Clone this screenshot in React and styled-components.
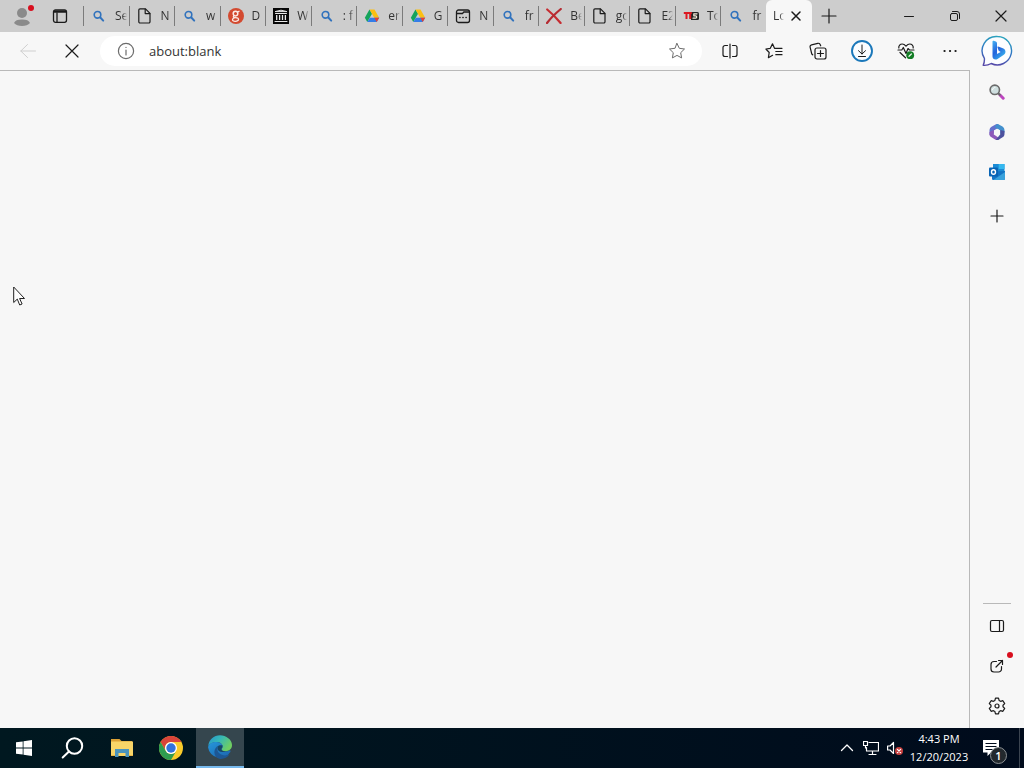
import React from "react";
import styled, { createGlobalStyle } from "styled-components";

const GlobalStyle = createGlobalStyle`
  *, *::before, *::after { box-sizing: border-box; }
  body {
    margin: 0;
    background: #f7f7f7;
    font-family: "Open Sans", "Noto Sans", sans-serif;
    color: #1b1b1b;
  }
  button, input { font: inherit; color: inherit; }
  svg { display: block; flex: none; }
`;

const Desktop = styled.div`
  position: relative;
  display: flex;
  flex-direction: column;
  min-height: 100vh;
`;

const IconButton = styled.button`
  display: flex;
  align-items: center;
  justify-content: center;
  flex: none;
  width: ${(p) => p.$w || 40}px;
  height: ${(p) => p.$h || 40}px;
  padding: 0;
  border: 0;
  background: none;
  color: ${(p) => p.$color || "#1b1b1b"};
`;

const TabBar = styled.header`
  display: flex;
  height: 32px;
  background: #cdcdcd;
`;

const TabTools = styled.div`
  display: flex;
  flex: none;
  padding-right: 7px;
`;

const TabList = styled.div`
  display: flex;
  flex: 1;
  min-width: 0;
`;

const Tab = styled.button`
  display: flex;
  align-items: center;
  flex: 1 1 0;
  min-width: 0;
  height: 32px;
  padding: 0 2px 0 0;
  border: 0;
  background: none;
  text-align: left;

  &::before {
    content: "";
    flex: none;
    width: 1px;
    height: 20px;
    margin-right: 7px;
    background: #7b7b7b;
  }
`;

const TabTitle = styled.span`
  flex: 1;
  min-width: 0;
  margin-left: ${(p) => p.$gap}px;
  overflow: hidden;
  white-space: nowrap;
  font-size: 12px;
  line-height: 20px;
  color: #333;
  mask-image: linear-gradient(to right, #000 60%, transparent);
`;

const ActiveTab = styled.div`
  display: flex;
  align-items: center;
  flex: none;
  width: 46px;
  padding-right: 4px;
  border-radius: 6px 6px 0 0;
  background: #f7f7f7;
`;

const WindowControls = styled.div`
  display: flex;
  flex: none;
  margin-left: 40px;
`;

const Body = styled.div`
  display: flex;
  flex: 1;
`;

const Main = styled.div`
  display: flex;
  flex-direction: column;
  flex: 1;
  min-width: 0;
`;

const Toolbar = styled.nav`
  display: flex;
  align-items: center;
  gap: 4px;
  height: 38px;
  padding-left: 8px;
`;

const AddressBar = styled.div`
  display: flex;
  align-items: center;
  flex: 1;
  min-width: 0;
  height: 30px;
  margin: 0 4px;
  padding: 0 16px;
  border-radius: 15px;
  background: #fff;
`;

const AddressInput = styled.input`
  flex: 1;
  min-width: 0;
  height: 24px;
  margin: 0 14px;
  padding: 0;
  border: 0;
  outline: 0;
  background: none;
  font-size: 13px;
  line-height: 24px;
  color: #333;
`;

const Page = styled.main`
  flex: 1;
  border-top: 1px solid #b9b9b9;
  border-right: 1px solid #b9b9b9;
  background: #f7f7f7;
`;

const Sidebar = styled.aside`
  display: flex;
  flex-direction: column;
  align-items: center;
  flex: none;
  width: 54px;
  padding-bottom: 2px;
`;

const SideGroup = styled.div`
  display: flex;
  flex-direction: column;
  align-items: center;
  margin-top: ${(p) => p.$top || "0"};
`;

const SideDivider = styled.hr`
  width: 28px;
  height: 1px;
  margin: 0 0 2px;
  border: 0;
  background: #b9b9b9;
`;

const Badged = styled.div`
  position: relative;
`;

const RedDot = styled.span`
  position: absolute;
  top: ${(p) => p.$top}px;
  right: ${(p) => p.$right}px;
  width: 6px;
  height: 6px;
  border-radius: 50%;
  background: #d80f1e;
`;

const Taskbar = styled.footer`
  display: flex;
  justify-content: space-between;
  height: 40px;
  background: linear-gradient(to right, #001820, #000b1c);
`;

const TaskApps = styled.div`
  display: flex;
  gap: 1px;
`;

const TaskButton = styled(IconButton)`
  background: ${(p) => (p.$active ? "#35464e" : "none")};
  border-bottom: ${(p) => (p.$active ? "2px solid #76b9ed" : "0")};
`;

const Tray = styled.div`
  display: flex;
  align-items: center;
`;

const Clock = styled.time`
  width: 64px;
  text-align: center;
  font-size: 11px;
  line-height: 18px;
  color: #fff;
`;

const ShowDesktop = styled.button`
  width: 5px;
  height: 40px;
  padding: 0;
  border: 0;
  border-left: 1px solid #3b4450;
  background: none;
`;

const Notice = styled.button`
  position: relative;
  display: flex;
  align-items: center;
  width: 48px;
  height: 40px;
  padding: 0 0 0 12px;
  border: 0;
  background: none;
`;

const NoticeCount = styled.span`
  position: absolute;
  left: 19px;
  top: 19px;
  width: 17px;
  height: 17px;
  border: 1px solid #8b9094;
  border-radius: 50%;
  background: #22282d;
  color: #fff;
  font-size: 11px;
  font-weight: 600;
  line-height: 15px;
  text-align: center;
`;

const Pointer = styled.div`
  position: absolute;
  left: 13px;
  top: 286px;
`;

const Icon = ({ size = 16, box = 16, w = 1, children }) => (
  <svg width={size} height={size} viewBox={`0 0 ${box} ${box}`} fill="none" stroke="currentColor"
    strokeWidth={w} strokeLinecap="round" strokeLinejoin="round" aria-hidden="true">
    {children}
  </svg>
);

const SearchTabIcon = () => (
  <Icon>
    <g stroke="#3273bd">
      <circle cx="6.5" cy="6.8" r="3.3" strokeWidth="1.6" />
      <path d="M9.3 9.5 12.2 12.6" strokeWidth="2" />
    </g>
  </Icon>
);

const FileIcon = () => (
  <Icon w={1.2}>
    <path d="M3 .8h5.500l4.500 4.500v8.500a1.200 1.200 0 0 1-1.200 1.200H3a1.200 1.200 0 0 1-1.200-1.200V2A1.200 1.200 0 0 1 3 .8Z" />
    <path d="M8.200 1v4.600h4.600" />
  </Icon>
);

const GDiscIcon = () => (
  <Icon w={1.5}>
    <circle cx="8" cy="8" r="8" fill="#d34a30" stroke="none" />
    <g stroke="#fbe9e4">
      <circle cx="7.5" cy="5.6" r="2.3" />
      <path d="M9.5 4 11 3.300M6 7.800c-1.400 1.200-.4 1.800 1.400 1.800 2.600 0 3.300.8 3.100 2-.5 2.200-5.800 2.200-6 .2 0-1 .7-1.600 1.800-2" strokeWidth="1.300" />
    </g>
  </Icon>
);

const ArchiveIcon = () => (
  <Icon>
    <path d="M0 0h16v16H0z" fill="#080808" stroke="none" />
    <path d="M2.500 3.500 8 2.200l5.500 1.300zM2 13.500h12M2.500 5.500h11" stroke="#e8e8e8" />
    <path d="M3.700 7v5M6.600 7v5M9.500 7v5M12.400 7v5" stroke="#e8e8e8" strokeWidth="1.300" strokeLinecap="butt" />
  </Icon>
);

const DriveIcon = () => (
  <Icon>
    <g stroke="none">
      <path d="M5.500 1.500 8 5.800 3.300 14 .8 9.700z" fill="#15a45b" />
      <path d="M5.500 1.500h5L15.200 9.700h-5z" fill="#fbbf12" />
      <path d="M5.800 9.700h9.400L12.700 14H3.300z" fill="#347de8" />
      <path d="M10.300 9.700h4.900L12.700 14z" fill="#e54236" />
    </g>
  </Icon>
);

const BrowserDotsIcon = () => (
  <Icon w={1.3}>
    <rect x="1.500" y="2" width="13" height="12.500" rx="2" />
    <path d="M2 5.500h5.500l1.300-1.500h5.500" />
    <path d="M4.800 9.500h.2M7.900 9.500h.2M11 9.500h.2" strokeWidth="1.500" />
  </Icon>
);

const RedCrossIcon = () => (
  <Icon w={2.200}>
    <path d="M1.200 1.500C5 4.600 10.500 10 14.600 15" stroke="#c62c31" />
    <path d="M14.800 1C10 5 4 11 1 15" stroke="#b52b32" />
  </Icon>
);

const T5Icon = () => (
  <Icon w={1.800}>
    <path d="M8 4h6.500A1.500 1.500 0 0 1 16 5.500v5a1.500 1.500 0 0 1-1.500 1.500H8z" fill="#242424" stroke="none" />
    <path d="M.8 5h8M3.500 5v6M7.200 5v6" stroke="#dd1821" strokeWidth="2" strokeLinecap="butt" />
    <path d="M14 5.800h-3.200v2h1.800c1.500 0 1.500 2.400 0 2.400H10" stroke="#f4eddc" strokeWidth="1.200" />
  </Icon>
);

const CloseIcon = ({ size = 16, w = 1.200, inset = 3 }) => (
  <Icon size={size} w={w}>
    <path d={`M${inset} ${inset}L${16 - inset} ${16 - inset}M${16 - inset} ${inset}L${inset} ${16 - inset}`} />
  </Icon>
);

const PlusIcon = ({ r = 7 }) => (
  <Icon w={1.200}>
    <path d={`M8 ${8 - r}v${2 * r}M${8 - r} 8h${2 * r}`} />
  </Icon>
);

const BingIcon = () => (
  <Icon size={32} box={32}>
    <defs>
      <linearGradient id="ring" x1=".6" y1="0" x2=".4" y2="1">
        <stop offset="0" stopColor="#2ba3bd" />
        <stop offset=".5" stopColor="#2f78c4" />
        <stop offset="1" stopColor="#5648a8" />
      </linearGradient>
      <linearGradient id="bolt" x1="0" y1="0" x2=".7" y2="1">
        <stop offset="0" stopColor="#45b4f2" />
        <stop offset=".5" stopColor="#2463dc" />
        <stop offset="1" stopColor="#38b4ee" />
      </linearGradient>
    </defs>
    <path d="M16.500 1.500a14.200 14.200 0 1 1-6.300 27c-2.500 1.500-5.200 2-8 1.800 1-2.300 1.400-4.600 1.200-7A14.200 14.200 0 0 1 16.500 1.500Z" fill="#fcfdff" stroke="url(#ring)" strokeWidth="1.400" />
    <path d="M11.500 6.500c0-.7.600-.9 1.200-.7l2 .8c.8.300 1.300 1 1.300 1.900v10.500l3.700-2.100-2-1.200-1.300-3.400c-.2-.6.200-1 .8-.8l4.600 1.700c3.300 1.200 3.600 5.100.7 6.800L16.500 24c-2.300 1.300-5 .1-5-2.500z" fill="url(#bolt)" stroke="none" />
  </Icon>
);

const MagnifierIcon = () => (
  <Icon>
    <path d="m11 11 3.200 3.200" stroke="#bd45bf" strokeWidth="3" />
    <path d="m9.300 9.300 1.500 1.500" stroke="#666" strokeWidth="2" />
    <circle cx="5.800" cy="5.800" r="4.700" fill="#cfdfdf" stroke="#6b6b6b" strokeWidth="1.600" />
    <path d="M3.500 5.800C3.700 4.400 4.800 3.600 6 3.500" stroke="#fff" />
  </Icon>
);

const OfficeIcon = () => (
  <Icon size={18} box={18}>
    <g stroke="none">
      <path d="M8 1.200 3.500 3.700A4 4 0 0 0 1.500 7v5l4.300-1.600V7.700L10.500 5V1.500A3 3 0 0 0 8 1.200Z" fill="#6670cc" />
      <path d="M9 .9c.7 0 1.200.1 1.800.5l3.700 2.200a4 4 0 0 1 2 3.400v2.500L12.300 11V7.500L6.500 4z" fill="#4390cd" />
      <path d="M1.500 9v2.300c0 1.200.6 2.200 1.600 2.800l4 2.400c1.200.7 2.600.7 3.800 0l1.300-.8-6.400-4.300V7z" fill="#8d58b9" />
      <path d="M16.500 8v3c0 1.400-.7 2.600-1.900 3.300l-3.700 2.200c-1 .6-2 .7-3 .3l4.400-5.600V7z" fill="#4d529f" />
      <path d="m9 5.700 3 1.700v3.300l-3 1.700-3-1.700V7.400z" fill="#f7f7f7" />
    </g>
  </Icon>
);

const OutlookIcon = () => (
  <Icon size={18} box={18}>
    <g stroke="none">
      <path d="M5 1h11.500v10H5z" fill="#1b8bd5" />
      <path d="M10.700 1H16a.5.500 0 0 1 .5.500V6h-5.800z" fill="#35b8ef" />
      <path d="M4 8.500 17 8v7.800a1.200 1.200 0 0 1-1.200 1.200H5.200A1.200 1.200 0 0 1 4 15.800z" fill="#1474c4" />
      <path d="m9 14.500 8-5.500v6.800c0 .7-.5 1.200-1.200 1.200H5.200z" fill="#39a2dc" />
      <rect x="1" y="4.500" width="9" height="9" rx="1" fill="#0864b5" />
    </g>
    <ellipse cx="5.500" cy="9" rx="2" ry="2.300" stroke="#fff" strokeWidth="1.400" />
  </Icon>
);

const GearIcon = () => (
  <Icon size={18} box={18} w={1.200}>
    <path d="M7.500 1.200h3l.6 2.200 1.500.9 2.300-.6 1.800 2.900L15 8.200v1.600l1.700 1.600-1.800 2.900-2.300-.6-1.500.9-.6 2.200h-3l-.6-2.200-1.500-.9-2.300.6-1.800-2.900L3 9.800V8.200L1.300 6.600l1.800-2.900 2.300.6 1.500-.9z" />
    <circle cx="9" cy="9" r="2" />
  </Icon>
);

const StarIcon = () => (
  <Icon size={18} box={18}>
    <path d="m9 1.500 2.300 4.800 5.200.7-3.800 3.700.9 5.200L9 13.400l-4.600 2.500.9-5.200L1.500 7l5.200-.7z" />
  </Icon>
);

const FavoritesIcon = () => (
  <Icon size={18} box={18} w={1.200}>
    <path d="M11 6.300H9.500L7.500 1.800 5.300 6.300.9 7l3.300 3.500-.8 5.200 4.200-2.400M11 6.300h6M10.800 9.500H17M10.800 12.700H17" />
  </Icon>
);

const CollectionsIcon = () => (
  <Icon size={18} box={18} w={1.200}>
    <rect x="6" y="6" width="11" height="11" rx="2" />
    <path d="M11.500 8.500v6M8.500 11.500h6M3.700 12.800 2.800 12 1.100 5.200A2 2 0 0 1 2.600 2.800l6.200-1.500A2 2 0 0 1 11.200 2.800l.5 1" />
  </Icon>
);

const DownloadIcon = () => (
  <Icon size={22} box={22}>
    <circle cx="11" cy="11" r="10" fill="#fbfdff" stroke="#1b78ba" strokeWidth="1.900" />
    <path d="M11 5v9M7.500 10.700 11 14l3.500-3.300M7.500 16.500h7" />
  </Icon>
);

const HealthIcon = () => (
  <Icon size={18} box={18} w={1.200}>
    <path d="M1.800 6C1.500 3.500 3.200 2 5.200 2 7 2 8 3 9 4.200 10 3 11 2 12.800 2c2 0 3.700 1.500 3.400 4M1 8h3.800l1.500-2.500L9 11.500l2-5L12.500 8H17M3 10.500l5.500 5.300" />
    <circle cx="13.200" cy="13.200" r="3.900" fill="#137d25" stroke="none" />
    <path d="m12 14.300 2.400-2.300" stroke="#e9f5ea" />
  </Icon>
);

const tabs = [
  [SearchTabIcon, "Se"], [FileIcon, "N"], [SearchTabIcon, "w"], [GDiscIcon, "D"],
  [ArchiveIcon, "W"], [SearchTabIcon, ": f"], [DriveIcon, "er"], [DriveIcon, "G"],
  [BrowserDotsIcon, "N"], [SearchTabIcon, "fr"], [RedCrossIcon, "Be"], [FileIcon, "go"],
  [FileIcon, "E2"], [T5Icon, "To"], [SearchTabIcon, "fr"],
];

export default function App() {
  return (
    <Desktop>
      <GlobalStyle />
      <TabBar>
        <TabTools>
          <Badged>
            <IconButton $w={44} $h={32} aria-label="Profile">
              <Icon size={20} box={20}>
                <g fill="#8a8a8a" stroke="none">
                  <circle cx="10" cy="7" r="5" />
                  <path d="M2 17C3 14.500 5.500 13.500 10 13.500s7 1 8 3.500C16.300 19 13.400 20 10 20s-6.300-1-8-3Z" />
                </g>
              </Icon>
            </IconButton>
            <RedDot $top={5} $right={10} />
          </Badged>
          <IconButton $w={32} $h={32} aria-label="Workspaces">
            <Icon w={1.300}>
              <rect x="1.500" y="1.800" width="13" height="12.500" rx="2" />
              <path d="M2 3.500h12" strokeWidth="2.500" strokeLinecap="butt" />
              <path d="M5 5v9" />
            </Icon>
          </IconButton>
        </TabTools>
        <TabList>
          {tabs.map(([TabIcon, title], i) => (
            <Tab key={i}>
              <TabIcon />
              <TabTitle $gap={8}>{title}</TabTitle>
            </Tab>
          ))}
          <ActiveTab>
            <TabTitle $gap={7}>Lo</TabTitle>
            <IconButton $w={24} $h={32} aria-label="Close tab"><CloseIcon w={1.500} inset={4} /></IconButton>
          </ActiveTab>
        </TabList>
        <IconButton $w={34} $h={32} aria-label="New tab"><PlusIcon /></IconButton>
        <WindowControls>
          <IconButton $w={46} $h={32} aria-label="Minimize"><Icon><path d="M3.500 8.500h9" /></Icon></IconButton>
          <IconButton $w={46} $h={32} aria-label="Restore">
            <Icon>
              <rect x="3.500" y="5.500" width="7" height="7" rx="1.500" />
              <path d="M5.500 3.500h4.500a2.500 2.500 0 0 1 2.500 2.500v4.500" />
            </Icon>
          </IconButton>
          <IconButton $w={46} $h={32} aria-label="Close"><CloseIcon /></IconButton>
        </WindowControls>
      </TabBar>

      <Body>
        <Main>
          <Toolbar>
            <IconButton $h={38} $color="#cfcfcf" aria-label="Back">
              <Icon><path d="M15.500 8H.8M7.500 1.500.8 8l6.700 6.500" /></Icon>
            </IconButton>
            <IconButton $h={38} aria-label="Stop"><CloseIcon inset={2} /></IconButton>
            <AddressBar>
              <IconButton $w={19} $h={24} $color="#6c6c6c" aria-label="Site information">
                <Icon size={18} box={18} w={1.200}>
                  <circle cx="9" cy="9" r="7.600" />
                  <path d="M9 8v5M9 5.300v.2" />
                </Icon>
              </IconButton>
              <AddressInput aria-label="Address" defaultValue="about:blank" />
              <IconButton $w={18} $h={24} $color="#6c6c6c" aria-label="Add to favorites"><StarIcon /></IconButton>
            </AddressBar>
            <IconButton $h={38} aria-label="Split screen">
              <Icon w={1.200}>
                <path d="M5.500 2.500H3a2 2 0 0 0-2 2v7a2 2 0 0 0 2 2h2.500M10.500 2.500H13a2 2 0 0 1 2 2v7a2 2 0 0 1-2 2h-2.500M8 1v14" />
              </Icon>
            </IconButton>
            <IconButton $h={38} aria-label="Favorites"><FavoritesIcon /></IconButton>
            <IconButton $h={38} aria-label="Collections"><CollectionsIcon /></IconButton>
            <IconButton $h={38} aria-label="Downloads"><DownloadIcon /></IconButton>
            <IconButton $h={38} aria-label="Browser essentials"><HealthIcon /></IconButton>
            <IconButton $h={38} aria-label="Settings and more">
              <Icon w={2.200}><path d="M2.500 8h.1M8 8h.1M13.500 8h.1" /></Icon>
            </IconButton>
          </Toolbar>
          <Page />
        </Main>
        <Sidebar>
          <SideGroup>
            <IconButton $h={38} aria-label="Bing"><BingIcon /></IconButton>
          </SideGroup>
          <SideGroup $top="2px">
            <IconButton aria-label="Search"><MagnifierIcon /></IconButton>
            <IconButton aria-label="Microsoft 365"><OfficeIcon /></IconButton>
            <IconButton aria-label="Outlook"><OutlookIcon /></IconButton>
          </SideGroup>
          <SideGroup $top="4px">
            <IconButton aria-label="Customize"><PlusIcon r={6} /></IconButton>
          </SideGroup>
          <SideGroup $top="auto">
            <SideDivider />
            <IconButton aria-label="Hide sidebar">
              <Icon w={1.200}><rect x="1.500" y="2.500" width="13" height="11" rx="1.500" /><path d="M10.500 2.500v11" /></Icon>
            </IconButton>
            <Badged>
              <IconButton aria-label="Open link">
                <Icon w={1.200}>
                  <path d="M7.500 3.500H5a3 3 0 0 0-3 3V11a3 3 0 0 0 3 3h4.500a3 3 0 0 0 3-3V8.500M7 9l6.500-6.500M9.500 2.500h4v4" />
                </Icon>
              </IconButton>
              <RedDot $top={6} $right={4} />
            </Badged>
            <IconButton aria-label="Settings"><GearIcon /></IconButton>
          </SideGroup>
        </Sidebar>
      </Body>

      <Taskbar>
        <TaskApps>
          <TaskButton $w={48} $color="#fff" aria-label="Start">
            <Icon>
              <path d="M0 2.300 6.700 1.400v6.200H0zM7.500 1.300 16 0v7.600H7.500zM0 8.400h6.700v6.200L0 13.700zM7.500 8.400H16V16l-8.500-1.300z" fill="#fff" stroke="none" />
            </Icon>
          </TaskButton>
          <TaskButton $w={48} $color="#fff" aria-label="Search">
            <Icon size={24} box={24} w={2}>
              <circle cx="13.500" cy="10" r="7.700" />
              <path d="m8 15.500-6.300 6" />
            </Icon>
          </TaskButton>
          <TaskButton $w={48} aria-label="File Explorer">
            <Icon size={22} box={22}>
              <g stroke="none">
                <path d="M0 2h8.500l2 2H21v3H0z" fill="#dca135" />
                <path d="M0 4.500h22V19H0z" fill="#f8d568" />
                <path d="M4 12h14v8h-3.500v-4h-7v4H4z" fill="#4a94bd" />
                <path d="M0 18h4v1H0zM18 18h4v1h-4z" fill="#e8b545" />
              </g>
            </Icon>
          </TaskButton>
          <TaskButton $w={48} aria-label="Chrome">
            <Icon size={24} box={24}>
              <g stroke="none">
                <circle cx="12" cy="12" r="12" fill="#f9cb2b" />
                <path d="M1.600 6A12 12 0 0 1 22.400 6H12a6 6 0 0 0-5.200 9z" fill="#d9443a" />
                <path d="M1.600 6 6.800 15a6 6 0 0 0 10.400 0L12 24A12 12 0 0 1 1.600 6Z" fill="#2f9c50" />
                <circle cx="12" cy="12" r="6" fill="#fff" />
                <circle cx="12" cy="12" r="4.700" fill="#3273dc" />
              </g>
            </Icon>
          </TaskButton>
          <TaskButton $w={48} $active aria-label="Edge">
            <Icon size={24} box={24}>
              <defs>
                <linearGradient id="edgeTop" x1="0" y1="0" x2="1" y2=".5">
                  <stop offset="0" stopColor="#2592d0" />
                  <stop offset=".5" stopColor="#36b8b5" />
                  <stop offset="1" stopColor="#6fce62" />
                </linearGradient>
                <linearGradient id="edgeBase" x1="0" y1="0" x2=".8" y2="1">
                  <stop offset="0" stopColor="#2596dc" />
                  <stop offset="1" stopColor="#1d68b0" />
                </linearGradient>
              </defs>
              <g stroke="none">
                <path d="M.2 11C1 4.500 5.800.2 12 .2S24 4.700 24 10c0 4-3 6.200-6.400 6.200-2.600 0-4.200-.8-4.200-1.700 0-.7 1.200-1.200 1.200-3C14.600 9 12 7 8.600 7 4.500 7 1.600 8.800.2 11Z" fill="url(#edgeTop)" />
                <path d="M.1 12.500C.3 9 4 7 8.600 7c3 0 5.300 1.500 5.900 3.600.5 1.800-1.200 3-1.100 3.900.2 1.200 2 1.900 4.200 1.900 1.700 0 3-.4 4.200-1.200.6 0 .9 1 .5 1.800A12 12 0 0 1 .1 12.500Z" fill="url(#edgeBase)" />
                <path d="M11 10.500c-2.400 1.500-2.200 5 0 7.500 2.700 3 7.500 3 10.700 1.300-2.200 3.500-6 4.900-9.700 4.600-6.500-.8-8-11-1-13.400Z" fill="#1d5794" />
                <path d="M11 10.500c1-.5 2.300-.5 3.500.1.200 1.500-1.200 3-1.100 3.900.2 1.200 2 1.900 4.200 1.900-3 1-6.200.8-7.600-1.300-1-1.600-.5-3.700 1-4.600Z" fill="#174667" />
              </g>
            </Icon>
          </TaskButton>
        </TaskApps>
        <Tray>
          <IconButton $w={24} $color="#fff" aria-label="Show hidden icons">
            <Icon w={1.300}><path d="m2.500 10.500 5.500-5.500 5.500 5.500" /></Icon>
          </IconButton>
          <IconButton $w={24} $color="#fff" aria-label="Network">
            <Icon w={1.200}>
              <path d="M6 2.500h9.500v8.500H3.500V7.500M9.500 11v3.500M6 14.500h7M.5 1.500h4v4h-4zM2.500 5.500v2.500" />
            </Icon>
          </IconButton>
          <IconButton $w={24} $color="#fff" aria-label="Volume muted">
            <Icon w={1.200}>
              <path d="M.6 6H3l3.500-3.500v11L3 10H.6z" />
              <circle cx="12" cy="11" r="4" fill="#c6403f" stroke="none" />
              <path d="m10.400 9.400 3.200 3.200M13.600 9.400l-3.200 3.200" />
            </Icon>
          </IconButton>
          <Clock dateTime="2023-12-20T16:43">4:43 PM<br />12/20/2023</Clock>
          <Notice aria-label="Notifications">
            <Icon>
              <path d="M0 0h16v12.500H8L4.500 16v-3.500H0z" fill="#fff" stroke="none" />
              <path d="M2.500 3.500h11M2.500 6.500h11M2.500 9.500h7" stroke="#000b1c" strokeLinecap="butt" />
            </Icon>
            <NoticeCount>1</NoticeCount>
          </Notice>
          <ShowDesktop aria-label="Show desktop" />
        </Tray>
      </Taskbar>

      <Pointer>
        <svg width="12" height="20" viewBox="0 0 12 20" aria-hidden="true">
          <path d="M.7 1v15.500l3.600-3.400L6.700 19l2.400-1-2.500-5.500h4.900z" fill="#fff" stroke="#222" strokeWidth="1" />
        </svg>
      </Pointer>
    </Desktop>
  );
}
